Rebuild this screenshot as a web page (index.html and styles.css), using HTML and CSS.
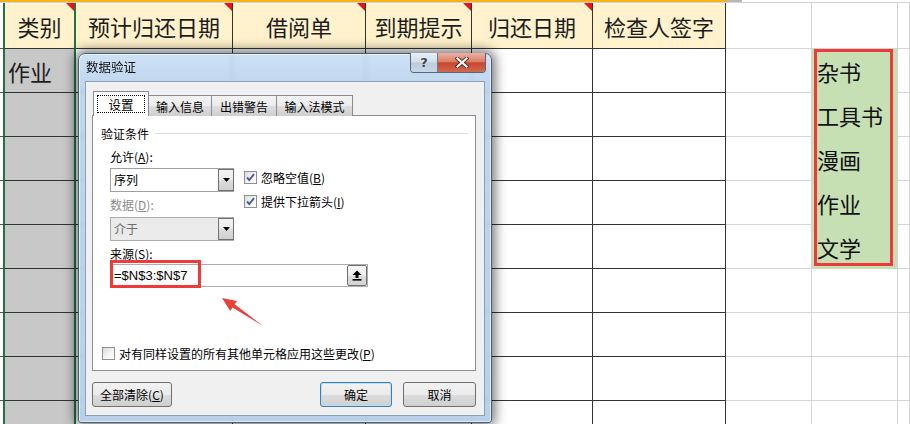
FILE: index.html
```html
<!DOCTYPE html>
<html lang="zh-CN">
<head>
<meta charset="utf-8">
<title>数据验证</title>
<link rel="stylesheet" href="styles.css">
</head>
<body>
<div class="sheet">
  <div class="topstrip"><div class="top-orange"></div><div class="top-grey"></div></div>
  <div class="grid">
    <div class="c0"></div>
    <div class="cat hd">类别<i class="tri"></i></div>
    <div class="t hd">预计归还日期<i class="tri"></i></div>
    <div class="t hd">借阅单<i class="tri"></i></div>
    <div class="t hd">到期提示<i class="tri"></i></div>
    <div class="t hd">归还日期<i class="tri"></i></div>
    <div class="t hd">检查人签字</div>
    <div class="g"></div><div class="g"></div><div class="g"></div>

    <div class="c0"></div><div class="cat">作业</div><div class="t"></div><div class="t"></div><div class="t"></div><div class="t"></div><div class="t"></div><div class="g"></div><div class="gl">杂书</div><div class="g"></div>
    <div class="c0"></div><div class="cat"></div><div class="t"></div><div class="t"></div><div class="t"></div><div class="t"></div><div class="t"></div><div class="g"></div><div class="gl">工具书</div><div class="g"></div>
    <div class="c0"></div><div class="cat"></div><div class="t"></div><div class="t"></div><div class="t"></div><div class="t"></div><div class="t"></div><div class="g"></div><div class="gl">漫画</div><div class="g"></div>
    <div class="c0"></div><div class="cat"></div><div class="t"></div><div class="t"></div><div class="t"></div><div class="t"></div><div class="t"></div><div class="g"></div><div class="gl">作业</div><div class="g"></div>
    <div class="c0"></div><div class="cat"></div><div class="t"></div><div class="t"></div><div class="t"></div><div class="t"></div><div class="t"></div><div class="g"></div><div class="gl">文学</div><div class="g"></div>
    <div class="c0"></div><div class="cat"></div><div class="t"></div><div class="t"></div><div class="t"></div><div class="t"></div><div class="t"></div><div class="g"></div><div class="g"></div><div class="g"></div>
    <div class="c0"></div><div class="cat"></div><div class="t"></div><div class="t"></div><div class="t"></div><div class="t"></div><div class="t"></div><div class="g"></div><div class="g"></div><div class="g"></div>
    <div class="c0"></div><div class="cat"></div><div class="t"></div><div class="t"></div><div class="t"></div><div class="t"></div><div class="t"></div><div class="g"></div><div class="g"></div><div class="g"></div>
    <div class="c0"></div><div class="cat"></div><div class="t"></div><div class="t"></div><div class="t"></div><div class="t"></div><div class="t"></div><div class="g"></div><div class="g"></div><div class="g"></div>
  </div>

  <div class="list-mark"></div>

  <div class="dialog">
    <div class="titlebar">
      <span class="title">数据验证</span>
      <div class="tbtns">
        <span class="tb help">?</span>
        <span class="tb close"><svg width="14" height="11" viewBox="0 0 14 11"><path d="M2.5 1.5 L11.5 9.5 M11.5 1.5 L2.5 9.5" stroke="#5a2a22" stroke-width="4" stroke-linecap="square" fill="none"/><path d="M2.5 1.5 L11.5 9.5 M11.5 1.5 L2.5 9.5" stroke="#ffffff" stroke-width="2.2" stroke-linecap="square" fill="none"/></svg></span>
      </div>
    </div>
    <div class="client">
      <div class="tabs">
        <div class="tab sel"><span class="focus">设置</span></div>
        <div class="tab w1">输入信息</div>
        <div class="tab w2">出错警告</div>
        <div class="tab w3">输入法模式</div>
      </div>
      <div class="panel">
        <div class="grouphead"><span>验证条件</span><i class="gline"></i></div>
        <div class="lbl allow">允许(<u>A</u>):</div>
        <div class="opts">
          <div class="leftcol">
            <div class="select"><span class="val">序列</span><span class="dd"><svg width="7" height="4" viewBox="0 0 7 4"><path d="M0 0 H7 L3.5 4 Z" fill="#000"/></svg></span></div>
            <div class="lbl dis">数据(<u>D</u>):</div>
            <div class="select disabled"><span class="val">介于</span><span class="dd"><svg width="7" height="4" viewBox="0 0 7 4"><path d="M0 0 H7 L3.5 4 Z" fill="#000"/></svg></span></div>
          </div>
          <div class="rightcol">
            <div class="chk"><span class="box"><svg width="11" height="11" viewBox="0 0 11 11"><path d="M2 5.5 L4.3 8 L9 2.2" stroke="#4b5f8c" stroke-width="1.9" fill="none"/></svg></span>忽略空值(<u>B</u>)</div>
            <div class="chk second"><span class="box"><svg width="11" height="11" viewBox="0 0 11 11"><path d="M2 5.5 L4.3 8 L9 2.2" stroke="#4b5f8c" stroke-width="1.9" fill="none"/></svg></span>提供下拉箭头(<u>I</u>)</div>
          </div>
        </div>
        <div class="lbl src">来源(<u>S</u>):</div>
        <div class="srcinput"><span class="formula">=$N$3:$N$7</span><span class="collapse"><svg width="10" height="11" viewBox="0 0 10 11"><path d="M5 0.5 L9.5 5 H6.5 V8 H3.5 V5 H0.5 Z" fill="#000"/><rect x="0.5" y="9" width="9" height="1.6" fill="#000"/></svg></span></div>
        <div class="chk apply"><span class="box"></span>对有同样设置的所有其他单元格应用这些更改(<u>P</u>)</div>
      </div>
      <div class="buttons">
        <span class="btn clear">全部清除(<u>C</u>)</span>
        <span class="spacer"></span>
        <span class="btn ok">确定</span>
        <span class="btn cancel">取消</span>
      </div>
    </div>
  </div>

  <div class="src-mark"></div>
  <svg class="arrow" width="60" height="40" viewBox="0 0 60 40">
    <polygon points="2,3 17,6 14.7,9.2 43,31 12.5,12.5 10.2,15.9" fill="#e8423a"/>
  </svg>
</div>
</body>
</html>
```

FILE: styles.css
```css
* { box-sizing: border-box; }
html, body { margin: 0; padding: 0; }
body {
  width: 910px;
  height: 424px;
  overflow: hidden;
  background: #ffffff;
  font-family: "Noto Sans CJK SC", "Noto Sans", sans-serif;
}
.sheet {
  position: relative;
  width: 910px;
  height: 424px;
  overflow: hidden;
}
.topstrip {
  display: flex;
  height: 3px;
  border-bottom: 1px solid #d4d4d4;
}
.top-orange { width: 726px; height: 2px; background: #f2b31b; }
.top-grey { width: 16px; height: 2px; background: #b8b8b8; }

.grid {
  display: grid;
  grid-template-columns: 3px 73px 157px 133px 106px 121px 133px 86px 86px 12px;
  grid-template-rows: 46px repeat(9, 44px);
  font-size: 22px;
  color: #1d1d1d;
}
.grid > div {
  position: relative;
  display: flex;
  align-items: center;
  white-space: nowrap;
  overflow: hidden;
}
.c0 { border-bottom: 1px solid #555; }
.cat {
  background: #c8c8c8;
  border-left: 2px solid #217346;
  border-right: 2px solid #217346;
  border-bottom: 1px solid #333;
  padding-left: 3px;
}
.t {
  border-right: 1px solid #333;
  border-bottom: 1px solid #333;
  padding: 0 4px;
}
.hd { background: #fff2cc; justify-content: center; }
.cat.hd { background: #fff2cc; justify-content: center; padding-left: 0; }
.g {
  border-right: 1px solid #d4d4d4;
  border-bottom: 1px solid #d4d4d4;
}
.gl {
  background: #c6e0b4;
  border-right: 1px solid #d4d4d4;
  padding-left: 5px;
  color: #111;
}
.tri {
  position: absolute;
  top: 0;
  right: 0;
  width: 0;
  height: 0;
  border-top: 8px solid #ee1111;
  border-left: 8px solid transparent;
}
.list-mark {
  position: absolute;
  left: 814px;
  top: 49px;
  width: 79px;
  height: 217px;
  border: 3px solid #f03a3a;
}

/* dialog */
.dialog {
  position: absolute;
  left: 78px;
  top: 53px;
  width: 414px;
  height: 370px;
  border: 1px solid #4f5d70;
  border-radius: 7px 7px 3px 3px;
  background: linear-gradient(180deg, rgba(196, 220, 244, 0.82) 0%, rgba(181, 208, 236, 0.86) 30px, rgba(176, 204, 233, 0.9) 100%);
  backdrop-filter: blur(2.5px);
  box-shadow: 0 0 12px 3px rgba(0, 0, 0, 0.55), inset 0 0 0 1px rgba(255, 255, 255, 0.55);
  font-size: 12px;
  color: #000;
  display: flex;
  flex-direction: column;
}
.titlebar {
  height: 27px;
  display: flex;
  align-items: flex-start;
  justify-content: space-between;
  padding-left: 7px;
}
.title {
  line-height: 26px;
  font-size: 12.5px;
  color: #111;
}
.tbtns {
  display: flex;
  margin-right: 5px;
  margin-top: -1px;
  border: 1px solid #56667c;
  border-top: none;
  border-radius: 0 0 4px 4px;
  overflow: hidden;
  height: 20px;
}
.tb {
  display: flex;
  align-items: center;
  justify-content: center;
  height: 19px;
}
.help {
  width: 27px;
  background: linear-gradient(180deg, #e6eef8 0%, #d2deec 48%, #bccbde 52%, #c9d6e6 100%);
  border-right: 1px solid #6b7a8f;
  font-family: "DejaVu Sans", sans-serif;
  font-weight: bold;
  font-size: 13px;
  color: #3a4250;
  text-shadow: 0 0 2px #fff;
}
.close {
  width: 47px;
  background: linear-gradient(180deg, #eab1a3 0%, #dc7f69 45%, #c7452d 52%, #d26a4f 100%);
}

.client {
  margin: 0 6px;
  height: 335px;
  background: #f0f0f0;
  border: 1px solid #8a9fb8;
  padding: 9px 8px 0 6px;
  display: flex;
  flex-direction: column;
}
.tabs {
  display: flex;
  align-items: flex-end;
  height: 25px;
  margin-left: 1px;
  margin-bottom: -1px;
  position: relative;
  z-index: 1;
}
.tab {
  height: 21px;
  border: 1px solid #898c95;
  border-bottom: none;
  background: linear-gradient(180deg, #f3f3f3 0%, #ebebeb 50%, #dddddd 51%, #cfcfcf 100%);
  display: flex;
  align-items: center;
  justify-content: center;
  margin-left: -1px;
  color: #000;
}
.tab.sel {
  width: 56px;
  height: 25px;
  background: #ffffff;
  margin-left: 0;
  position: relative;
  z-index: 2;
}
.focus {
  border: 1px dotted #000;
  width: 48px;
  height: 18px;
  display: flex;
  align-items: center;
  justify-content: center;
  font-size: 12.5px;
}
.tab.w1 { width: 64px; }
.tab.w2 { width: 66px; }
.tab.w3 { width: 77px; }

.panel {
  width: 384px;
  height: 256px;
  background: #ffffff;
  border: 1px solid #898c95;
  display: flex;
  flex-direction: column;
}
.grouphead {
  margin-top: 11px;
  height: 14px;
  display: flex;
  align-items: center;
  padding-left: 8px;
  padding-right: 7px;
  line-height: 14px;
}
.gline {
  flex: 1;
  height: 1px;
  background: #d5dfe5;
  margin-left: 6px;
  margin-top: -1px;
}
.lbl { line-height: 14px; height: 14px; }
.allow { margin-top: 9px; padding-left: 17px; }
.opts {
  margin-top: 4px;
  padding-left: 17px;
  display: flex;
}
.leftcol { width: 124px; display: flex; flex-direction: column; }
.select {
  height: 24px;
  border: 1px solid #a0a0a0;
  background: #fff;
  display: flex;
  align-items: stretch;
}
.select .val { flex: 1; line-height: 22px; padding-left: 3px; }
.dd {
  width: 16px;
  border: 1px solid #707070;
  margin: 0 -1px 0 0;
  background: linear-gradient(180deg, #f2f2f2 0%, #ebebeb 50%, #dddddd 51%, #cfcfcf 100%);
  display: flex;
  align-items: center;
  justify-content: center;
}
.select.disabled { background: #ebebeb; margin-top: 5px; border-color: #adadad; }
.select.disabled .val { color: #6d6d6d; }
.dis { color: #8c8c8c; margin-top: 6px; }
.rightcol {
  margin-left: 10px;
  padding-top: 3px;
  display: flex;
  flex-direction: column;
}
.chk {
  display: flex;
  align-items: center;
  height: 13px;
  line-height: 13px;
  white-space: nowrap;
}
.chk.second { margin-top: 11px; }
.box {
  width: 13px;
  height: 13px;
  border: 1px solid #8e8f8f;
  background: linear-gradient(135deg, #dcdcdc 0%, #f6f6f6 60%, #ffffff 100%);
  margin-right: 4px;
  display: flex;
  align-items: center;
  justify-content: center;
  flex: none;
}
.src { margin-top: 6px; padding-left: 17px; }
.srcinput {
  margin-top: 3px;
  margin-left: 17px;
  width: 258px;
  height: 23px;
  border: 1px solid #abadb3;
  background: #fff;
  display: flex;
  align-items: center;
  justify-content: space-between;
  padding-left: 3px;
}
.formula {
  font-family: "Liberation Sans", Arial, sans-serif;
  font-size: 13px;
  color: #000;
}
.collapse {
  width: 20px;
  height: 21px;
  border: 1px solid #707070;
  border-radius: 2px;
  background: linear-gradient(180deg, #f6f6f6 0%, #ececec 50%, #dedede 51%, #d3d3d3 100%);
  display: flex;
  align-items: center;
  justify-content: center;
}
.apply {
  margin-top: auto;
  margin-bottom: 10px;
  margin-left: 9px;
}
.buttons {
  margin-top: 11px;
  display: flex;
  height: 25px;
}
.btn {
  height: 25px;
  border: 1px solid #707070;
  border-radius: 3px;
  background: linear-gradient(180deg, #f2f2f2 0%, #ebebeb 50%, #dddddd 51%, #cfcfcf 100%);
  display: flex;
  align-items: center;
  justify-content: center;
  color: #000;
}
.btn.clear { width: 80px; }
.spacer { flex: 1; }
.btn.ok {
  width: 72px;
  border-color: #3c7fb1;
  box-shadow: inset 0 0 0 1px #b9def5;
}
.btn.cancel { width: 73px; margin-left: 11px; }

.src-mark {
  position: absolute;
  left: 110px;
  top: 260px;
  width: 91px;
  height: 28px;
  border: 3px solid #f03a3a;
}
.arrow {
  position: absolute;
  left: 220px;
  top: 295px;
}
```
